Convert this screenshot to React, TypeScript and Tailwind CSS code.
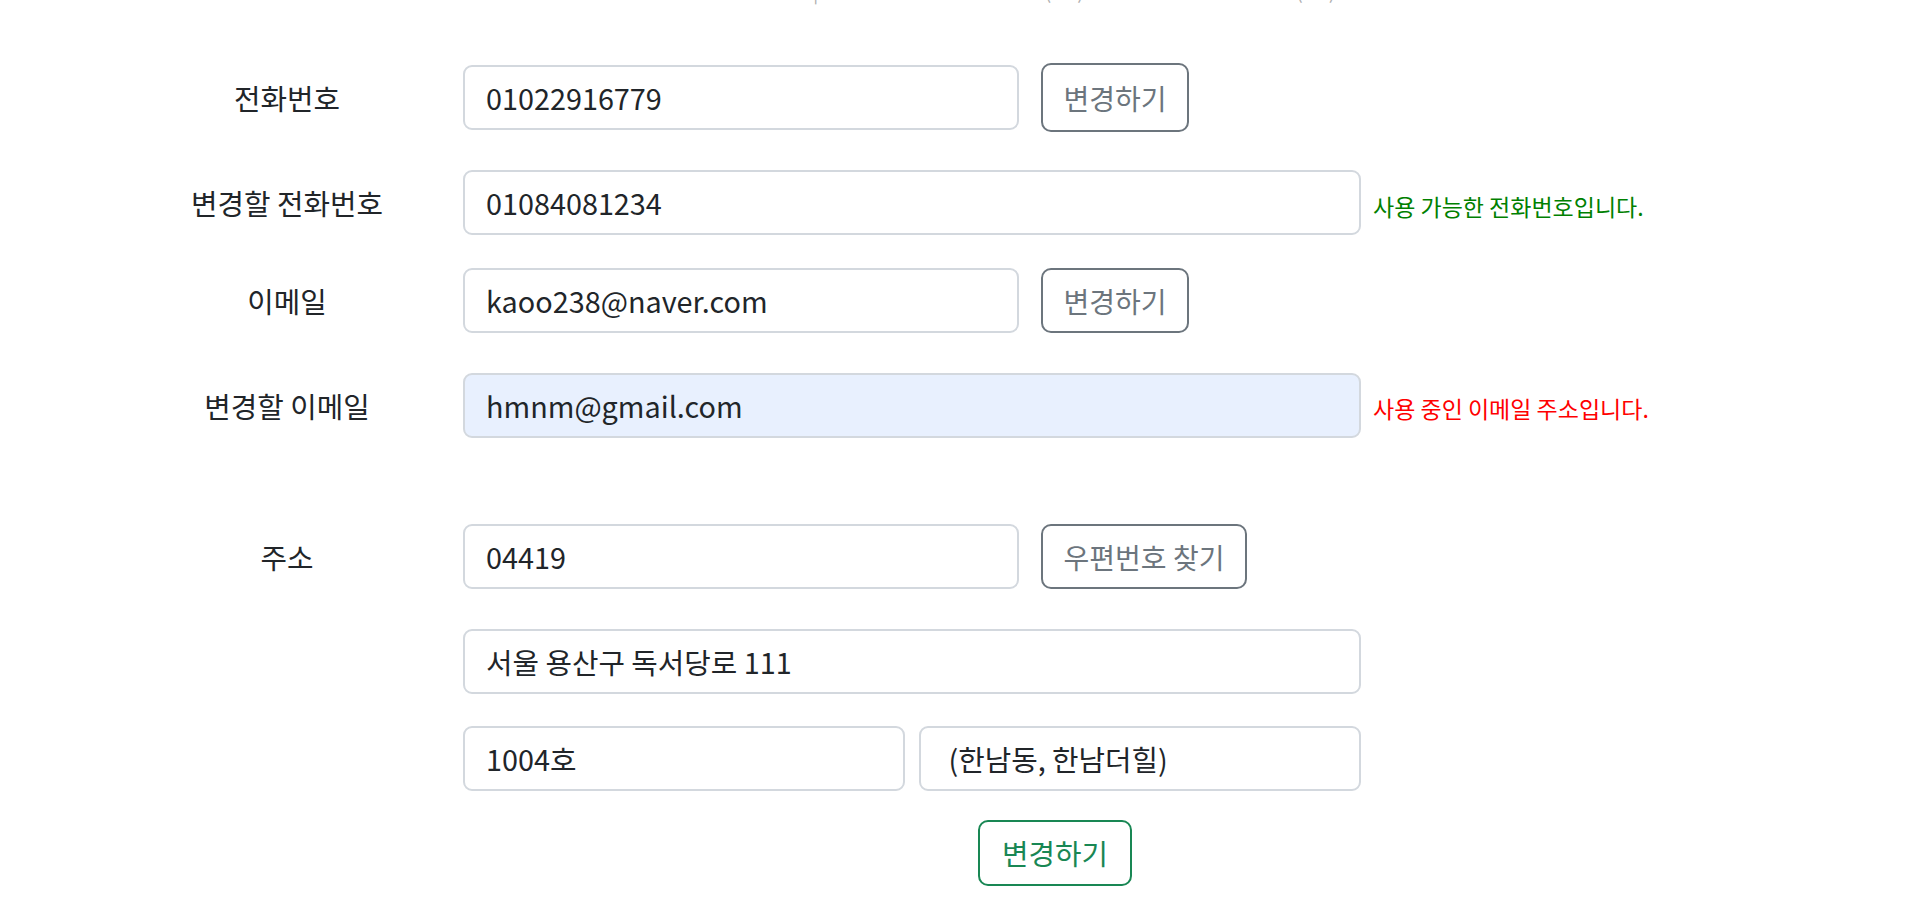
import React from "react";

function Label({ children }: { children: React.ReactNode }) {
  return (
    <div className="ml-[111px] w-[352px] shrink-0 text-center text-[28.8px] text-[#212529]">
      {children}
    </div>
  );
}

function Field({
  value,
  wide,
  half,
  autofill,
}: {
  value: string;
  wide?: boolean;
  half?: boolean;
  autofill?: boolean;
}) {
  const w = wide ? "w-[898px]" : half ? "w-[442px]" : "w-[556px]";
  const bg = autofill ? "bg-[#e8f0fe]" : "bg-white";
  return (
    <input
      readOnly
      value={value}
      className={`${w} ${bg} h-[65px] shrink-0 rounded-[9px] border-2 border-[#d3d8de] px-[21px] text-[28.8px] text-[#212529] outline-none`}
    />
  );
}

function GrayButton({ children, tall, w }: { children: React.ReactNode; tall?: boolean; w: string }) {
  return (
    <button
      className={`${w} ${tall ? "h-[69px]" : "h-[65px]"} ml-[22px] shrink-0 rounded-[10px] border-2 border-[#6c757d] bg-white text-[28px] text-[#6c757d]`}
    >
      {children}
    </button>
  );
}

export default function App() {
  return (
    <div className="min-h-[912px] w-[1926px] overflow-hidden bg-white font-['Noto_Sans_CJK_KR','Noto_Sans',sans-serif] text-[#212529]">
      {/* clipped line from section above */}
      <div className="h-[6px] overflow-hidden">
        <div className="-mt-[24px] flex h-[30px] items-end whitespace-pre text-[20px] leading-[30px] text-[#b0b0b0]">
          <span className="ml-[813px]">|</span>
          <span className="ml-[226px]">(</span>
          <span className="ml-[26px]">)</span>
          <span className="ml-[212px]">(</span>
          <span className="ml-[26px]">)</span>
        </div>
      </div>

      <div className="flex flex-col pt-[59px]">
        {/* 전화번호 */}
        <div className="flex h-[65px] items-center">
          <Label>전화번호</Label>
          <Field value="01022916779" />
          <GrayButton tall w="w-[148px]">변경하기</GrayButton>
        </div>

        {/* 변경할 전화번호 */}
        <div className="mt-[40px] flex h-[65px] items-center">
          <Label>변경할 전화번호</Label>
          <Field value="01084081234" wide />
          <span className="ml-[12px] pt-[8px] text-[23px] text-[#008000]">사용 가능한 전화번호입니다.</span>
        </div>

        {/* 이메일 */}
        <div className="mt-[33px] flex h-[65px] items-center">
          <Label>이메일</Label>
          <Field value="kaoo238@naver.com" />
          <GrayButton w="w-[148px]">변경하기</GrayButton>
        </div>

        {/* 변경할 이메일 */}
        <div className="mt-[40px] flex h-[65px] items-center">
          <Label>변경할 이메일</Label>
          <Field value="hmnm@gmail.com" wide autofill />
          <span className="ml-[12px] pt-[6px] text-[23px] text-[#ff0000]">사용 중인 이메일 주소입니다.</span>
        </div>

        {/* 주소 */}
        <div className="mt-[86px] flex h-[65px] items-center">
          <Label>주소</Label>
          <Field value="04419" />
          <GrayButton w="w-[206px]">우편번호 찾기</GrayButton>
        </div>

        <div className="mt-[40px] flex h-[65px] items-center">
          <div className="ml-[463px]" />
          <Field value="서울 용산구 독서당로 111" wide />
        </div>

        <div className="mt-[32px] flex h-[65px] items-center gap-[14px]">
          <div className="ml-[449px]" />
          <Field value="1004호" half />
          <Field value=" (한남동, 한남더힐)" half />
        </div>

        <div className="mt-[29px] flex">
          <button className="ml-[978px] h-[66px] w-[154px] rounded-[10px] border-2 border-[#198754] bg-white text-[28.8px] text-[#198754]">
            변경하기
          </button>
        </div>
      </div>
    </div>
  );
}
